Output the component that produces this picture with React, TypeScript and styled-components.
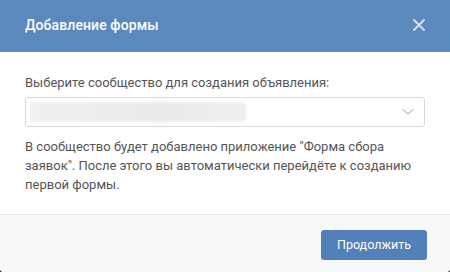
import React from "react";
import styled, { createGlobalStyle } from "styled-components";

const GlobalStyle = createGlobalStyle`
  html, body {
    margin: 0;
    padding: 0;
    background: #3a3a3a;
  }
  body {
    font-family: Roboto, "Open Sans", "Liberation Sans", sans-serif;
    -webkit-font-smoothing: antialiased;
  }
`;

const Modal = styled.div`
  width: 450px;
  height: 272px;
  display: flex;
  flex-direction: column;
  background: #fff;
  border-radius: 0 0 4px 4px;
  overflow: hidden;
`;

const Header = styled.div`
  height: 52px;
  flex-shrink: 0;
  display: flex;
  align-items: center;
  justify-content: space-between;
  padding: 0 25px;
  background: #5b88bd;
  color: #fff;
`;

const Title = styled.div`
  font-size: 14px;
  font-weight: 500;
  letter-spacing: 0.1px;
  margin-top: -2px;
`;

const CloseButton = styled.button`
  border: 0;
  background: none;
  padding: 0;
  margin-right: -2px;
  margin-top: -2px;
  width: 16px;
  height: 16px;
  display: flex;
  align-items: center;
  justify-content: center;
  cursor: pointer;
  opacity: 0.75;
`;

const Body = styled.div`
  flex: 1;
  padding: 22px 25px 0;
  color: #5b5b5b;
  font-size: 13px;
`;

const Label = styled.div`
  line-height: 18px;
  margin-bottom: 5px;
  color: #555;
`;

const Select = styled.div`
  height: 30px;
  box-sizing: border-box;
  border: 1px solid #d3d9de;
  border-radius: 3px;
  display: flex;
  align-items: center;
  justify-content: space-between;
  padding: 0 10px 0 4px;
`;

const Blurred = styled.div`
  width: 216px;
  height: 20px;
  background: linear-gradient(90deg, #ededed 0%, #e6e6e6 60%, #ececec 100%);
  filter: blur(1.5px);
  opacity: 0.85;
`;

const Note = styled.p`
  margin: 10px 0 0;
  line-height: 19px;
  color: #555;
`;

const Footer = styled.div`
  height: 57px;
  flex-shrink: 0;
  border-top: 1px solid #e7e8ec;
  background: #f7f8fa;
  display: flex;
  align-items: center;
  justify-content: flex-end;
  padding: 0 23px 0 0;
`;

const Button = styled.button`
  height: 30px;
  padding: 0 16px;
  margin-top: 2px;
  border: 0;
  border-radius: 3px;
  background: #5181b8;
  color: #fff;
  font-family: inherit;
  font-size: 12.5px;
  cursor: pointer;
`;

export default function App() {
  return (
    <>
      <GlobalStyle />
      <Modal>
        <Header>
          <Title>Добавление формы</Title>
          <CloseButton aria-label="Закрыть">
            <svg width="12" height="12" viewBox="0 0 12 12">
              <path d="M1 1L11 11M11 1L1 11" stroke="#fff" strokeWidth="1.8" strokeLinecap="round" />
            </svg>
          </CloseButton>
        </Header>
        <Body>
          <Label>Выберите сообщество для создания объявления:</Label>
          <Select>
            <Blurred />
            <svg width="12" height="8" viewBox="0 0 12 8">
              <path d="M1 1.5L6 6L11 1.5" fill="none" stroke="#c0c6cc" strokeWidth="1.4" strokeLinecap="round" strokeLinejoin="round" />
            </svg>
          </Select>
          <Note>
            В сообщество будет добавлено приложение "Форма сбора заявок". После этого вы автоматически перейдёте к созданию первой формы.
          </Note>
        </Body>
        <Footer>
          <Button>Продолжить</Button>
        </Footer>
      </Modal>
    </>
  );
}
